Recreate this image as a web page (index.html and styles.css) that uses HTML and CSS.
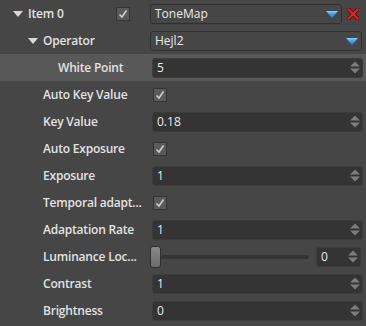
FILE: index.html
```html
<!DOCTYPE html>
<html>
<head>
<meta charset="utf-8">
<link rel="stylesheet" href="styles.css">
</head>
<body>
<svg class="defs" width="0" height="0">
  <defs>
    <linearGradient id="bl" x1="0" y1="0" x2="0" y2="1"><stop offset="0" stop-color="#8fd0ff"/><stop offset="0.35" stop-color="#4aa8ec"/><stop offset="1" stop-color="#1f78cf"/></linearGradient>
    <symbol id="spin" viewBox="0 0 10 13"><path d="M0 5.5L5 0.5L10 5.5Z M0 7.5L10 7.5L5 12.5Z" fill="#7c7c7c"/></symbol>
    <symbol id="chk" viewBox="0 0 12 12"><path d="M2.5 6.5L5 9L9.5 2.5" fill="none" stroke="#cfcfcf" stroke-width="1.6"/></symbol>
  </defs>
</svg>
<div class="panel">
  <div class="row">
    <div class="label l0">
      <svg class="tri" width="10" height="6" viewBox="0 0 10 6"><path d="M0 0H10L5 6Z" fill="#d8d8d8"/></svg>
      <span class="name">Item 0</span>
      <span class="check cb-head"><svg width="12" height="12"><use href="#chk"/></svg></span>
    </div>
    <div class="value">
      <div class="combo c0"><span>ToneMap</span><svg class="dd" width="12" height="7" viewBox="0 0 12 7"><path d="M0 0H12L6 7Z" fill="url(#bl)"/></svg></div>
      <svg class="del" width="12" height="12" viewBox="0 0 12 12"><path d="M1.5 1.5L10.5 10.5M10.5 1.5L1.5 10.5" stroke="#5a0e0e" stroke-width="4" stroke-linecap="square"/><path d="M1.5 1.5L10.5 10.5M10.5 1.5L1.5 10.5" stroke="#e02424" stroke-width="2.2" stroke-linecap="square"/></svg>
    </div>
  </div>
  <div class="row">
    <div class="label l1">
      <svg class="tri" width="10" height="6" viewBox="0 0 10 6"><path d="M0 0H10L5 6Z" fill="#d8d8d8"/></svg>
      <span class="name">Operator</span>
    </div>
    <div class="value">
      <div class="combo c1"><span>Hejl2</span><svg class="dd" width="12" height="7" viewBox="0 0 12 7"><path d="M0 0H12L6 7Z" fill="url(#bl)"/></svg></div>
    </div>
  </div>
  <div class="row hl">
    <div class="label l2"><span class="name">White Point</span></div>
    <div class="value"><div class="num"><span>5</span><svg class="spin" width="10" height="13"><use href="#spin"/></svg></div></div>
  </div>
  <div class="row">
    <div class="label l3"><span class="name">Auto Key Value</span></div>
    <div class="value"><span class="check"><svg width="12" height="12"><use href="#chk"/></svg></span></div>
  </div>
  <div class="row">
    <div class="label l3"><span class="name">Key Value</span></div>
    <div class="value"><div class="num"><span>0.18</span><svg class="spin" width="10" height="13"><use href="#spin"/></svg></div></div>
  </div>
  <div class="row">
    <div class="label l3"><span class="name">Auto Exposure</span></div>
    <div class="value"><span class="check"><svg width="12" height="12"><use href="#chk"/></svg></span></div>
  </div>
  <div class="row">
    <div class="label l3"><span class="name">Exposure</span></div>
    <div class="value"><div class="num"><span>1</span><svg class="spin" width="10" height="13"><use href="#spin"/></svg></div></div>
  </div>
  <div class="row">
    <div class="label l3"><span class="name">Temporal adapt...</span></div>
    <div class="value"><span class="check"><svg width="12" height="12"><use href="#chk"/></svg></span></div>
  </div>
  <div class="row">
    <div class="label l3"><span class="name">Adaptation Rate</span></div>
    <div class="value"><div class="num"><span>1</span><svg class="spin" width="10" height="13"><use href="#spin"/></svg></div></div>
  </div>
  <div class="row">
    <div class="label l3"><span class="name">Luminance Loc...</span></div>
    <div class="value">
      <div class="slider"><span class="thumb"></span><span class="track"></span></div>
      <div class="num small"><span>0</span><svg class="spin" width="10" height="13"><use href="#spin"/></svg></div>
    </div>
  </div>
  <div class="row">
    <div class="label l3"><span class="name">Contrast</span></div>
    <div class="value"><div class="num"><span>1</span><svg class="spin" width="10" height="13"><use href="#spin"/></svg></div></div>
  </div>
  <div class="row">
    <div class="label l3"><span class="name">Brightness</span></div>
    <div class="value"><div class="num"><span>0</span><svg class="spin" width="10" height="13"><use href="#spin"/></svg></div></div>
  </div>
</div>
</body>
</html>
```
FILE: styles.css
```css
html, body {
  margin: 0;
  padding: 0;
  background: #464646;
}
.defs {
  position: absolute;
  width: 0;
  height: 0;
}
.panel {
  width: 366px;
  height: 326px;
  background: #464646;
  font-family: "Open Sans", "Noto Sans", sans-serif;
  font-size: 12px;
  color: #e6e6e6;
}
.row {
  display: flex;
  align-items: center;
  height: 27px;
}
.row.hl {
  background: #585858;
}
.label {
  width: 150px;
  flex: none;
  display: flex;
  align-items: center;
  box-sizing: border-box;
  font-weight: 600;
  color: #e2e2e2;
  letter-spacing: -0.2px;
}
.l0 { padding-left: 13px; }
.l0 .name { margin-left: 5px; width: 88px; }
.l1 { padding-left: 28px; }
.l1 .name { margin-left: 5px; }
.l2 { padding-left: 58px; }
.l3 { padding-left: 43px; }
.tri { flex: none; }
.value {
  flex: 1;
  display: flex;
  align-items: center;
}
.check {
  width: 12px;
  height: 12px;
  border: 1px solid #343434;
  background: #5a5a5a;
  display: flex;
  margin-left: 3px;
}
.check.cb-head { margin-left: 0; }
.combo {
  height: 18px;
  border: 1px solid #303030;
  border-radius: 3px;
  display: flex;
  align-items: center;
  justify-content: space-between;
  padding: 0 3px 0 4px;
  box-sizing: content-box;
  color: #ececec;
}
.c0 { width: 183px; }
.c1 { width: 203px; }
.dd { margin-top: 1px; }
.del { margin-left: 5px; }
.num {
  margin-left: 2px;
  width: 205px;
  height: 18px;
  background: #343434;
  border: 1px solid #3c3c3c;
  border-radius: 3px;
  display: flex;
  align-items: center;
  justify-content: space-between;
  padding-left: 4px;
  box-sizing: content-box;
  color: #ececec;
}
.num.small {
  width: 39px;
  margin-left: 0;
}
.spin {
  flex: none;
  margin-right: 2px;
}
.slider {
  width: 166px;
  display: flex;
  align-items: center;
}
.thumb {
  width: 9px;
  height: 20px;
  border: 1px solid #2f2f2f;
  border-radius: 3px;
  background: linear-gradient(#8a8a8a, #6c6c6c);
  flex: none;
}
.track {
  width: 148px;
  height: 4px;
  background: #343434;
  border-radius: 2px;
}
```
